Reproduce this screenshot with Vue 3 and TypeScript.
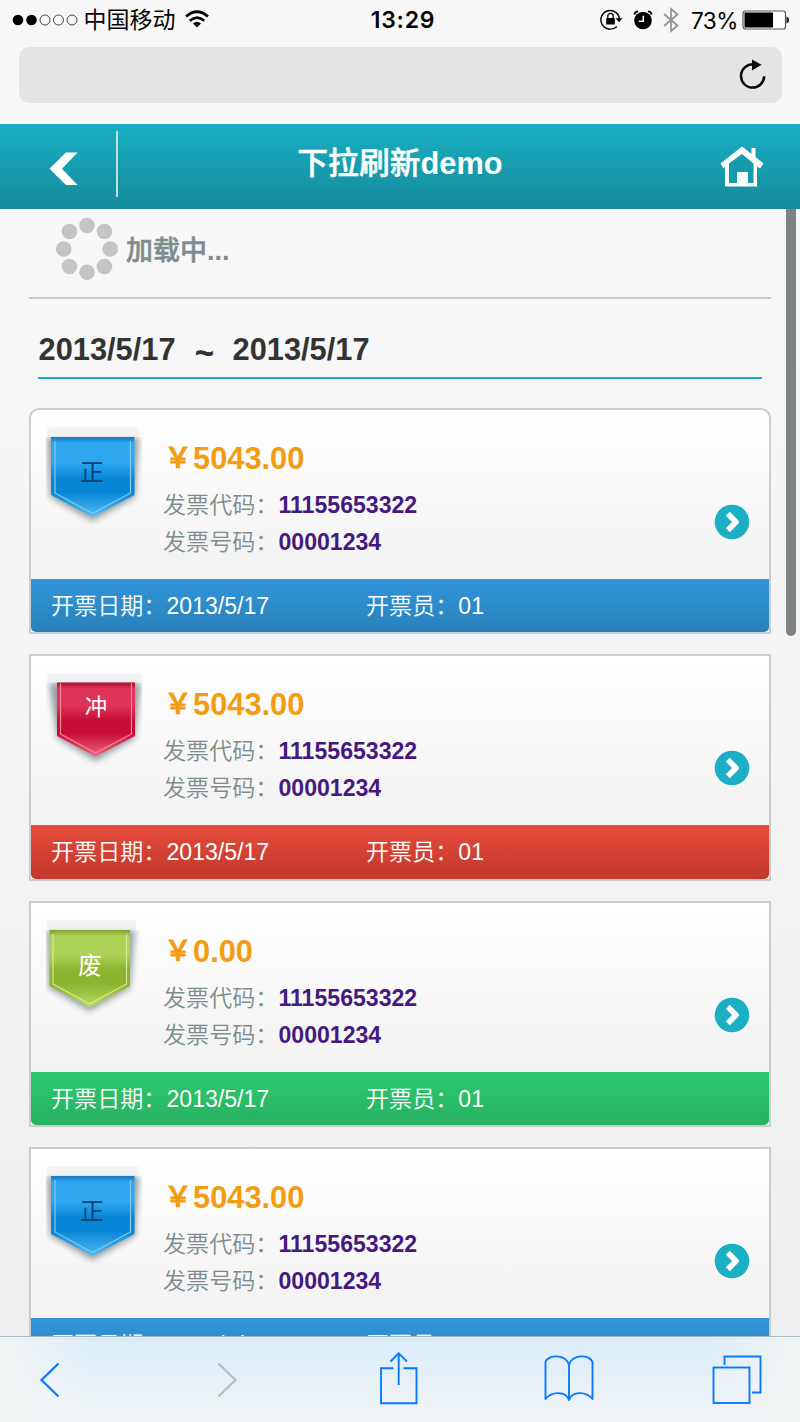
<script setup lang="ts">
type Kind = 'normal' | 'reversed' | 'voided'

interface Ribbon {
  char: string
  outline: string
  stitch: string
  shadow: string
  lip: number
  x: number
  y: number
  size: number
}

interface Invoice {
  id: number
  kind: Kind
  amount: string
  code: string
  number: string
  date: string
  clerk: string
}

const ribbons: Record<Kind, Ribbon> = {
  normal: {
    char: '正',
    outline: 'M5 10H88.5V68L46.5 90L5 68Z',
    stitch: 'M9 14V66L46.5 86.5L84.5 66V14',
    shadow: 'M1 10H93L89 70L46.5 94L4 70Z',
    lip: 92,
    x: 46,
    y: 54,
    size: 24,
  },
  reversed: {
    char: '冲',
    outline: 'M11 9.5H89V63L49.5 83.5L11 63Z',
    stitch: 'M14.5 10V61L49.5 80L85.5 61V10',
    shadow: 'M3 9.5H95L89 65L49.5 88L11 65Z',
    lip: 95,
    x: 50,
    y: 42,
    size: 22.5,
  },
  voided: {
    char: '废',
    outline: 'M3.500 10H84V66L43.500 87.500L3.500 66Z',
    stitch: 'M7 14V64L43.500 84L80.500 64V14',
    shadow: 'M1 10H89L84 68L43.500 91L3 68Z',
    lip: 89,
    x: 44,
    y: 53.5,
    size: 23.5,
  },
}

const invoices: Invoice[] = [
  { id: 1, kind: 'normal', amount: '5043.00', code: '11155653322', number: '00001234', date: '2013/5/17', clerk: '01' },
  { id: 2, kind: 'reversed', amount: '5043.00', code: '11155653322', number: '00001234', date: '2013/5/17', clerk: '01' },
  { id: 3, kind: 'voided', amount: '0.00', code: '11155653322', number: '00001234', date: '2013/5/17', clerk: '01' },
  { id: 4, kind: 'normal', amount: '5043.00', code: '11155653322', number: '00001234', date: '2013/5/17', clerk: '01' },
]

const spinnerDots = [
  [32, 8.500], [49.500, 14.500], [55.200, 32], [49.500, 49.500],
  [32, 55.200], [14.500, 49.500], [8.700, 32], [14.500, 14.500],
]
</script>

<template>
  <div class="phone">
    <div class="status">
      <div class="status-left">
        <svg class="signal" width="66" height="14" viewBox="0 0 66 14">
          <circle cx="6" cy="7" r="5.300" fill="#000" />
          <circle cx="19.500" cy="7" r="5.300" fill="#000" />
          <g fill="none" stroke="#333" stroke-width="0.900">
            <circle cx="33" cy="7" r="5" />
            <circle cx="46.500" cy="7" r="5" />
            <circle cx="60" cy="7" r="5" />
          </g>
        </svg>
        <span class="carrier">中国移动</span>
        <svg class="wifi" width="24" height="18" viewBox="0 0 24 18">
          <g fill="none" stroke="#050505" stroke-width="2.700">
            <path d="M1 6.500Q12 -3 23 6.500" />
            <path d="M4.800 10.800Q12 4.300 19.200 10.800" />
          </g>
          <path d="M8 13.500Q12 10.200 16 13.500L12 17.500Z" fill="#050505" />
        </svg>
      </div>
      <span class="clock">13:29</span>
      <div class="status-right">
        <svg width="23" height="22" viewBox="0 0 23 22">
          <path d="M16.800 17.400A9.300 9.300 0 1 1 19.500 11.200" fill="none" stroke="#000" stroke-width="1.400" />
          <path d="M15.500 9.300H22.500L19 13.300Z" fill="#000" />
          <rect x="6.200" y="9" width="8.600" height="6.500" rx="0.600" fill="#000" />
          <path d="M7.800 9.500V7a2.700 2.700 0 0 1 5.400 0V9.500" fill="none" stroke="#000" stroke-width="1.300" />
        </svg>
        <svg class="alarm" width="20" height="20" viewBox="0 0 20 20">
          <circle cx="10" cy="10.500" r="8.800" fill="#000" />
          <path d="M1.300 4.500Q2 1.600 5 1.400M18.700 4.500Q18 1.600 15 1.400" fill="none" stroke="#000" stroke-width="1.800" />
          <path d="M10.300 5.700V11.200H5.800" fill="none" stroke="#fff" stroke-width="1.500" />
        </svg>
        <svg class="bluetooth" width="16" height="26" viewBox="0 0 16 26">
          <path d="M1 7L14.500 18.500L8 24.200V1.800L14.500 7.500L1 19" fill="none" stroke="#8f9393" stroke-width="1.700" />
        </svg>
        <span class="percent">73%</span>
        <svg class="battery" width="48" height="20" viewBox="0 0 48 20">
          <rect x="1" y="1" width="42.500" height="18" rx="2.500" fill="#fff" stroke="#555" stroke-width="1.200" />
          <path d="M2.500 2.500H31V17.500H2.500Z" fill="#000" />
          <path d="M44.500 6.500Q47 7 47 10Q47 13 44.500 13.500Z" fill="#222" />
        </svg>
      </div>
    </div>

    <div class="address">
      <div class="address-field">
        <svg width="28" height="32" viewBox="0 0 28 32">
          <path d="M14.500 5.400A11.600 11.600 0 1 0 25.200 17.300" fill="none" stroke="#0a0a0a" stroke-width="2.500" />
          <path d="M13 .5L22.500 5.700L13 11.500Z" fill="#0a0a0a" />
        </svg>
      </div>
    </div>

    <header class="navbar">
      <div class="nav-back">
        <svg width="30" height="34" viewBox="0 0 30 34">
          <path d="M17 .5H28.500L13 16.800L28.500 33H17L.5 16.800Z" fill="#fff" />
        </svg>
      </div>
      <h1><span class="title-cjk">下拉刷新</span>demo</h1>
      <div class="nav-home">
        <svg width="44" height="42" viewBox="0 0 44 42">
          <path d="M22 .5L31.500 8V2H35.500V11L43.500 17.500L40 22.500L37 20.500V40.500H5V20.500L3.500 22.500L.5 17.500Z" fill="#fff" />
          <path d="M22 8L33.500 17.500V37H28V26H17V37H9V17.500Z" fill="#179bac" />
        </svg>
      </div>
    </header>

    <main class="page">
      <div class="scroller"></div>
      <div class="loading">
        <svg width="64" height="64" viewBox="0 0 64 64">
          <circle v-for="(dot, i) in spinnerDots" :key="i" :cx="dot[0]" :cy="dot[1]" r="7.800" fill="#c4c4c4" />
        </svg>
        <span><span class="loading-cjk">加载中</span>...</span>
      </div>

      <div class="range">
        <span>2013/5/17</span>
        <span class="tilde">~</span>
        <span>2013/5/17</span>
      </div>

      <ul class="cards">
        <li v-for="item in invoices" :key="item.id" class="card" :class="item.kind">
          <div class="card-body">
            <svg class="ribbon" width="98" height="102" viewBox="0 0 98 102">
              <defs>
                <linearGradient :id="'fill' + item.id" x1="0" y1="0" x2="0" y2="1">
                  <stop class="stop-edge" offset="0" />
                  <stop class="stop-light" offset="0.080" />
                  <stop class="stop-light" offset="0.320" />
                  <stop class="stop-deep" offset="0.520" />
                  <stop class="stop-deep" offset="0.680" />
                  <stop class="stop-tip" offset="1" />
                </linearGradient>
                <linearGradient :id="'lip' + item.id" x1="0" y1="0" x2="0" y2="1">
                  <stop offset="0" stop-color="#f6f6f6" />
                  <stop offset="1" stop-color="#eeefef" />
                </linearGradient>
                <filter :id="'blur' + item.id" x="-20%" y="-20%" width="140%" height="140%">
                  <feGaussianBlur stdDeviation="3" />
                </filter>
                <clipPath :id="'below' + item.id"><path d="M0 9.700H96V98H0Z" /></clipPath>
              </defs>
              <rect x="1" y="0" :width="ribbons[item.kind].lip" height="10" rx="3" :fill="`url(#lip${item.id})`" />
              <g :clip-path="`url(#below${item.id})`">
                <path :d="ribbons[item.kind].shadow" fill="#4b5057" opacity="0.550" :filter="`url(#blur${item.id})`" />
              </g>
              <path :d="ribbons[item.kind].outline" :fill="`url(#fill${item.id})`" />
              <path class="stitch" :d="ribbons[item.kind].stitch" />
              <text
                class="ribbon-text"
                :x="ribbons[item.kind].x"
                :y="ribbons[item.kind].y"
                :font-size="ribbons[item.kind].size"
                text-anchor="middle"
              >{{ ribbons[item.kind].char }}</text>
            </svg>
            <div class="info">
              <div class="amount"><span class="yen">￥</span>{{ item.amount }}</div>
              <div class="field">发票代码：<b>{{ item.code }}</b></div>
              <div class="field">发票号码：<b>{{ item.number }}</b></div>
            </div>
            <svg class="go" width="36" height="36" viewBox="0 0 36 36">
              <circle cx="18" cy="18" r="17.300" fill="#1bafc3" />
              <path
                d="M13.800 9.800L22 18L13.800 26.200"
                fill="none"
                stroke="#fff"
                stroke-width="5.600"
                stroke-linejoin="round"
              />
            </svg>
          </div>
          <div class="card-foot">
            <span class="foot-date">开票日期：{{ item.date }}</span>
            <span>开票员：{{ item.clerk }}</span>
          </div>
        </li>
      </ul>
    </main>

    <nav class="toolbar">
      <div class="tool">
        <svg width="22" height="36" viewBox="0 0 22 36">
          <path d="M19.500 1.500L2.500 18L19.500 34.500" fill="none" stroke="#0a79ff" stroke-width="2.300" />
        </svg>
      </div>
      <div class="tool">
        <svg width="22" height="36" viewBox="0 0 22 36">
          <path d="M2.500 1.500L19.500 18L2.500 34.500" fill="none" stroke="#b9bec1" stroke-width="2.300" />
        </svg>
      </div>
      <div class="tool share">
        <svg width="40" height="54" viewBox="0 0 40 54">
          <g fill="none" stroke="#0a79ff" stroke-width="1.900">
            <path d="M14.500 17.300H2V52.300H37.500V17.300H24.500" />
            <path d="M19.700 34V2.500M11.500 10.500L19.700 2.300L28 10.500" />
          </g>
        </svg>
      </div>
      <div class="tool book">
        <svg width="50" height="50" viewBox="0 0 50 50">
          <path
            d="M25 46V11C22 0 4 0 1.500 8V45C8 37 22 37 25 46C28 37 42 37 48.500 45V8C46 0 28 0 25 11"
            fill="none"
            stroke="#0a79ff"
            stroke-width="1.900"
            stroke-linejoin="round"
          />
        </svg>
      </div>
      <div class="tool">
        <svg width="50" height="50" viewBox="0 0 50 50">
          <g fill="none" stroke="#0a79ff" stroke-width="1.900">
            <rect x="1.500" y="12.500" width="36" height="35.500" />
            <path d="M12.500 10V1.500H48.500V37.500H40" />
          </g>
        </svg>
      </div>
    </nav>
  </div>
</template>

<style>
html,
body {
  margin: 0;
  overflow: hidden;
}
</style>

<style scoped>
.phone {
  width: 800px;
  height: 1422px;
  display: flex;
  flex-direction: column;
  overflow: hidden;
  background: #f7f7f7;
  font-family: "Liberation Sans", "Noto Sans CJK SC", sans-serif;
}

svg {
  display: block;
  flex: none;
}

.title-cjk,
.loading-cjk {
  font-weight: 500;
  -webkit-text-stroke: 0.500px currentColor;
}

.status {
  height: 40px;
  flex: none;
  display: grid;
  grid-template-columns: 1fr 64px 1fr;
  align-items: center;
  color: #050505;
}

.status-left {
  display: flex;
  align-items: center;
  padding-left: 12px;
}

.carrier {
  margin-left: 5.500px;
  font-size: 23px;
  line-height: 40px;
}

.wifi {
  margin-left: 9.500px;
  margin-top: -3px;
}

.clock {
  font-family: Inter, sans-serif;
  font-weight: 600;
  font-size: 23px;
  text-align: center;
  white-space: nowrap;
  letter-spacing: 0.800px;
  margin: 0 -14px 0 -8px;
}

.status-right {
  display: flex;
  align-items: center;
  justify-content: flex-end;
  padding-right: 10px;
}

.alarm {
  margin-left: 10px;
}

.bluetooth {
  margin-left: 10px;
}

.percent {
  width: 46px;
  margin-left: 12px;
  font-family: Inter, sans-serif;
  font-size: 22.600px;
  white-space: nowrap;
  letter-spacing: -0.600px;
}

.battery {
  margin-left: 5px;
}

.address {
  flex: none;
  height: 84px;
  box-sizing: border-box;
  padding: 7px 18.500px 21px 19px;
}

.address-field {
  height: 56px;
  border-radius: 10px;
  background: #e4e4e6;
  display: flex;
  align-items: center;
  justify-content: flex-end;
  padding-right: 15px;
}

.navbar {
  flex: none;
  height: 85px;
  display: grid;
  grid-template-columns: 118px 1fr 118px;
  background: linear-gradient(#1aafc4, #148b9a);
  color: #fff;
}

.nav-back {
  box-sizing: border-box;
  height: 66px;
  margin-top: 7px;
  border-right: 2px solid #c4dddf;
  display: flex;
  padding: 21px 0 0 49px;
}

.navbar h1 {
  margin: 0;
  font-size: 30.800px;
  line-height: 79px;
  text-align: center;
}

.nav-home {
  display: flex;
  justify-content: flex-end;
  padding: 21.500px 36px 0 0;
}

.page {
  flex: 1;
  min-height: 0;
  overflow: hidden;
  position: relative;
  padding: 0 29px;
  background: linear-gradient(#f8f8f8, #eeeeee);
}

.scroller {
  position: absolute;
  top: 0;
  right: 4px;
  width: 10px;
  height: 427px;
  border-radius: 0 0 5px 5px;
  background: #7f8282;
}

.loading {
  height: 88px;
  display: flex;
  align-items: flex-start;
  padding: 0 0 0 26px;
  border-bottom: 2px solid #c8c8c8;
  font-size: 27px;
  font-weight: bold;
  line-height: 84px;
  color: #7f8c8d;
}

.loading svg {
  margin: 8px 7px 0 0;
}

.range {
  display: flex;
  gap: 19px;
  margin: 22px 9px 29px;
  height: 56px;
  border-bottom: 2px solid #1bafc4;
  font-size: 30.800px;
  line-height: 57px;
  font-weight: bold;
  color: #333;
}

.range span {
  padding-left: 0.500px;
}

.range .tilde {
  transform: translateY(3px) scale(1.080, 1.200);
}

.cards {
  margin: 0;
  padding: 0;
  list-style: none;
  display: flex;
  flex-direction: column;
  gap: 20px;
}

.card {
  box-sizing: border-box;
  flex: none;
  height: 226.400px;
  border: 2px solid #cbcbcb;
  background: linear-gradient(#fff, #f2f2f2 170px);
}

.card:first-child {
  border-radius: 10px 10px 0 0;
}

.card-body {
  height: 169px;
  display: grid;
  grid-template-columns: 98px 1fr 36px;
  padding: 0 19px 0 15px;
  box-sizing: border-box;
}

.ribbon {
  margin-top: 17px;
}

.info {
  padding: 30px 0 0 19px;
}

.amount {
  display: flex;
  height: 47px;
  line-height: 38px;
  font-size: 30.800px;
  font-weight: bold;
  color: #f39c12;
}

.yen {
  width: 30px;
  font-size: 28px;
  font-weight: 500;
  text-align: center;
  -webkit-text-stroke: 0.900px currentColor;
}

.field {
  height: 37px;
  line-height: 37px;
  font-size: 23.100px;
  font-weight: 350;
  color: #7f8c8d;
  white-space: nowrap;
}

.field b {
  font-weight: bold;
  color: #46197e;
}

.go {
  margin-top: 94px;
}

.card-foot {
  height: 53.400px;
  display: grid;
  grid-template-columns: 315px 1fr;
  padding-left: 20px;
  border-radius: 0 0 5px 5px;
  font-size: 23.100px;
  font-weight: 350;
  line-height: 55px;
  color: #fff;
}

.normal .card-foot {
  background: linear-gradient(#3296da, #2880b9);
}

.reversed .card-foot {
  background: linear-gradient(#e54b3b, #c2382b);
}

.voided .card-foot {
  background: linear-gradient(#2dca70, #27b060);
}

.stitch {
  fill: none;
  stroke-width: 1.200;
}

.ribbon-text {
  fill: #fff;
}

.normal .ribbon-text {
  fill: #07466f;
}

.normal .stitch {
  stroke: #7fcbe9;
}

.reversed .stitch {
  stroke: #f08c96;
}

.voided .stitch {
  stroke: #d5e895;
}

.normal .stop-edge { stop-color: #1678bd; }
.normal .stop-light { stop-color: #2fa7f0; }
.normal .stop-deep { stop-color: #0785d6; }
.normal .stop-tip { stop-color: #54bbf3; }

.reversed .stop-edge { stop-color: #a80b2e; }
.reversed .stop-light { stop-color: #df3357; }
.reversed .stop-deep { stop-color: #c90c35; }
.reversed .stop-tip { stop-color: #ee6680; }

.voided .stop-edge { stop-color: #7fa02b; }
.voided .stop-light { stop-color: #aed158; }
.voided .stop-deep { stop-color: #8bb32e; }
.voided .stop-tip { stop-color: #b5dc62; }

.toolbar {
  flex: none;
  height: 86px;
  box-sizing: border-box;
  border-top: 1px solid #a9b8c2;
  padding-left: 39px;
  display: grid;
  grid-template-columns: 177px 163px 165px 168px 50px;
  align-items: center;
  background:
    linear-gradient(90deg, #f1f4f4, rgba(241, 244, 244, 0) 12%, rgba(241, 244, 244, 0) 88%, #f1f4f4),
    linear-gradient(#daecf8, #eef3f6 85%);
}

.share {
  margin-top: -4px;
}

.book {
  margin-top: -1px;
}
</style>
